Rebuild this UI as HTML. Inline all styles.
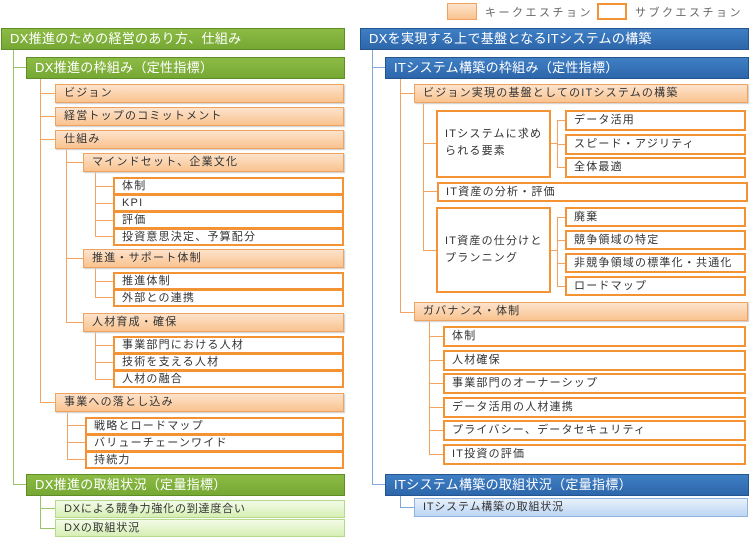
<!DOCTYPE html><html><head><meta charset="utf-8"><style>
body{margin:0;width:750px;height:548px;background:#fff;position:relative;overflow:hidden;font-family:"Liberation Sans","Noto Sans CJK JP",sans-serif;}
div{position:absolute;box-sizing:border-box;white-space:nowrap;}
.g{background:linear-gradient(#8cbc45,#76a834);border:1px solid #5f8d27;color:#fff;font-size:13px;padding-left:8px;line-height:19px;letter-spacing:.3px;}
.b{background:linear-gradient(#3f7fc4,#2d66ab);border:1px solid #24558f;color:#fff;font-size:13px;padding-left:8px;line-height:19px;letter-spacing:.3px;}
.k{background:linear-gradient(#fde3cc,#f9c38f);border:1px solid #f0a260;color:#333;font-size:11px;padding-left:8px;line-height:17px;box-shadow:1px 1px 1px #ccc;letter-spacing:1.2px;}
.s{background:#fff;border:2px solid #f39334;color:#333;font-size:11px;padding-left:7px;line-height:14px;letter-spacing:1.2px;}
.lg{background:linear-gradient(#f3fbe8,#d6efb4);border:1px solid #b6d98a;color:#333;font-size:11px;padding-left:8px;line-height:16px;letter-spacing:.8px;}
.lb{background:linear-gradient(#e8f1fc,#bcd6f3);border:1px solid #8fb4e0;color:#333;font-size:11px;padding-left:8px;line-height:16px;letter-spacing:.8px;}
.vo{width:1px;background:#f4a460;}.ho{height:1px;background:#f4a460;}
.vg{width:1px;background:#9bc46a;}.hg{height:1px;background:#9bc46a;}
.vb{width:1px;background:#7fa7da;}.hb{height:1px;background:#7fa7da;}
.t{font-size:11px;color:#666;letter-spacing:2.5px;}
</style></head><body>
<div style="left:447px;top:3px;width:30px;height:17px;background:linear-gradient(#fde3cc,#f9c38f);border:1px solid #f0a260"></div>
<div class="t" style="left:485px;top:4px">キークエスチョン</div>
<div style="left:597px;top:3px;width:30px;height:17px;border:2px solid #f39334"></div>
<div class="t" style="left:635px;top:4px">サブクエスチョン</div>

<div class="vg" style="left:13px;top:50px;height:435px"></div>
<div class="hg" style="left:13px;top:67px;width:13px"></div>
<div class="hg" style="left:13px;top:484px;width:13px"></div>
<div class="vo" style="left:40px;top:78px;height:325px"></div>
<div class="ho" style="left:40px;top:93px;width:15px"></div>
<div class="ho" style="left:40px;top:116px;width:15px"></div>
<div class="ho" style="left:40px;top:139px;width:15px"></div>
<div class="ho" style="left:40px;top:402px;width:15px"></div>
<div class="vo" style="left:66px;top:149px;height:174px"></div>
<div class="ho" style="left:66px;top:162px;width:17px"></div>
<div class="ho" style="left:66px;top:258px;width:17px"></div>
<div class="ho" style="left:66px;top:322px;width:17px"></div>
<div class="vo" style="left:95px;top:172px;height:65px"></div>
<div class="ho" style="left:95px;top:186px;width:18px"></div>
<div class="ho" style="left:95px;top:203px;width:18px"></div>
<div class="ho" style="left:95px;top:220px;width:18px"></div>
<div class="ho" style="left:95px;top:236px;width:18px"></div>
<div class="vo" style="left:95px;top:268px;height:30px"></div>
<div class="ho" style="left:95px;top:281px;width:18px"></div>
<div class="ho" style="left:95px;top:297px;width:18px"></div>
<div class="vo" style="left:95px;top:332px;height:48px"></div>
<div class="ho" style="left:95px;top:345px;width:18px"></div>
<div class="ho" style="left:95px;top:362px;width:18px"></div>
<div class="ho" style="left:95px;top:379px;width:18px"></div>
<div class="vo" style="left:67px;top:412px;height:48px"></div>
<div class="ho" style="left:67px;top:425px;width:18px"></div>
<div class="ho" style="left:67px;top:442px;width:18px"></div>
<div class="ho" style="left:67px;top:459px;width:18px"></div>
<div class="vg" style="left:40px;top:495px;height:34px"></div>
<div class="hg" style="left:40px;top:508px;width:15px"></div>
<div class="hg" style="left:40px;top:528px;width:15px"></div>

<div class="g" style="left:1px;top:28px;width:344px;height:22px">DX推進のための経営のあり方、仕組み</div>
<div class="g" style="left:26px;top:57px;width:319px;height:22px">DX推進の枠組み（定性指標）</div>
<div class="k" style="left:55px;top:84px;width:289px;height:19px">ビジョン</div>
<div class="k" style="left:55px;top:107px;width:289px;height:19px">経営トップのコミットメント</div>
<div class="k" style="left:55px;top:130px;width:289px;height:19px">仕組み</div>
<div class="k" style="left:83px;top:153px;width:261px;height:19px">マインドセット、企業文化</div>
<div class="s" style="left:113px;top:177px;width:231px;height:18px">体制</div>
<div class="s" style="left:113px;top:194px;width:231px;height:18px">KPI</div>
<div class="s" style="left:113px;top:211px;width:231px;height:18px">評価</div>
<div class="s" style="left:113px;top:228px;width:231px;height:18px">投資意思決定、予算配分</div>
<div class="k" style="left:83px;top:249px;width:261px;height:19px">推進・サポート体制</div>
<div class="s" style="left:113px;top:272px;width:231px;height:18px">推進体制</div>
<div class="s" style="left:113px;top:289px;width:231px;height:18px">外部との連携</div>
<div class="k" style="left:83px;top:313px;width:261px;height:19px">人材育成・確保</div>
<div class="s" style="left:113px;top:336px;width:231px;height:18px">事業部門における人材</div>
<div class="s" style="left:113px;top:353px;width:231px;height:18px">技術を支える人材</div>
<div class="s" style="left:113px;top:370px;width:231px;height:18px">人材の融合</div>
<div class="k" style="left:55px;top:393px;width:289px;height:19px">事業への落とし込み</div>
<div class="s" style="left:85px;top:417px;width:259px;height:18px">戦略とロードマップ</div>
<div class="s" style="left:85px;top:434px;width:259px;height:18px">バリューチェーンワイド</div>
<div class="s" style="left:85px;top:451px;width:259px;height:18px">持続力</div>
<div class="g" style="left:26px;top:474px;width:319px;height:22px">DX推進の取組状況（定量指標）</div>
<div class="lg" style="left:55px;top:500px;width:290px;height:18px">DXによる競争力強化の到達度合い</div>
<div class="lg" style="left:55px;top:519px;width:290px;height:18px">DXの取組状況</div>

<div class="vb" style="left:372px;top:50px;height:435px"></div>
<div class="hb" style="left:372px;top:67px;width:13px"></div>
<div class="hb" style="left:372px;top:484px;width:13px"></div>
<div class="vo" style="left:400px;top:78px;height:235px"></div>
<div class="ho" style="left:400px;top:93px;width:14px"></div>
<div class="ho" style="left:400px;top:312px;width:14px"></div>
<div class="vo" style="left:423px;top:103px;height:148px"></div>
<div class="ho" style="left:423px;top:143px;width:13px"></div>
<div class="ho" style="left:423px;top:191px;width:14px"></div>
<div class="ho" style="left:423px;top:250px;width:13px"></div>
<div class="ho" style="left:550px;top:143px;width:8px"></div>
<div class="vo" style="left:557px;top:120px;height:48px"></div>
<div class="ho" style="left:557px;top:120px;width:8px"></div>
<div class="ho" style="left:557px;top:144px;width:8px"></div>
<div class="ho" style="left:557px;top:167px;width:8px"></div>
<div class="ho" style="left:550px;top:250px;width:8px"></div>
<div class="vo" style="left:557px;top:217px;height:70px"></div>
<div class="ho" style="left:557px;top:217px;width:8px"></div>
<div class="ho" style="left:557px;top:240px;width:8px"></div>
<div class="ho" style="left:557px;top:263px;width:8px"></div>
<div class="ho" style="left:557px;top:286px;width:8px"></div>
<div class="vo" style="left:429px;top:321px;height:134px"></div>
<div class="ho" style="left:429px;top:336px;width:14px"></div>
<div class="ho" style="left:429px;top:360px;width:14px"></div>
<div class="ho" style="left:429px;top:383px;width:14px"></div>
<div class="ho" style="left:429px;top:407px;width:14px"></div>
<div class="ho" style="left:429px;top:430px;width:14px"></div>
<div class="ho" style="left:429px;top:454px;width:14px"></div>
<div class="vb" style="left:400px;top:495px;height:13px"></div>
<div class="hb" style="left:400px;top:507px;width:14px"></div>

<div class="b" style="left:360px;top:28px;width:389px;height:22px">DXを実現する上で基盤となるITシステムの構築</div>
<div class="b" style="left:385px;top:57px;width:364px;height:22px">ITシステム構築の枠組み（定性指標）</div>
<div class="k" style="left:414px;top:84px;width:334px;height:19px">ビジョン実現の基盤としてのITシステムの構築</div>
<div class="s" style="left:436px;top:110px;width:115px;height:68px;line-height:17px;padding:14px 0 0 7px">ITシステムに求め<br>られる要素</div>
<div class="s" style="left:565px;top:110px;width:181px;height:21px;line-height:17px">データ活用</div>
<div class="s" style="left:565px;top:134px;width:181px;height:21px;line-height:17px">スピード・アジリティ</div>
<div class="s" style="left:565px;top:157px;width:181px;height:21px;line-height:17px">全体最適</div>
<div class="s" style="left:437px;top:182px;width:311px;height:20px;line-height:16px">IT資産の分析・評価</div>
<div class="s" style="left:436px;top:207px;width:115px;height:86px;line-height:17px;padding:24px 0 0 7px">IT資産の仕分けと<br>プランニング</div>
<div class="s" style="left:565px;top:207px;width:181px;height:20px;line-height:16px">廃棄</div>
<div class="s" style="left:565px;top:230px;width:181px;height:20px;line-height:16px">競争領域の特定</div>
<div class="s" style="left:565px;top:253px;width:181px;height:20px;line-height:16px">非競争領域の標準化・共通化</div>
<div class="s" style="left:565px;top:276px;width:181px;height:20px;line-height:16px">ロードマップ</div>
<div class="k" style="left:414px;top:302px;width:334px;height:19px">ガバナンス・体制</div>
<div class="s" style="left:443px;top:326px;width:303px;height:21px;line-height:17px">体制</div>
<div class="s" style="left:443px;top:350px;width:303px;height:21px;line-height:17px">人材確保</div>
<div class="s" style="left:443px;top:373px;width:303px;height:21px;line-height:17px">事業部門のオーナーシップ</div>
<div class="s" style="left:443px;top:397px;width:303px;height:21px;line-height:17px">データ活用の人材連携</div>
<div class="s" style="left:443px;top:420px;width:303px;height:21px;line-height:17px">プライバシー、データセキュリティ</div>
<div class="s" style="left:443px;top:444px;width:303px;height:21px;line-height:17px">IT投資の評価</div>
<div class="b" style="left:385px;top:474px;width:364px;height:22px">ITシステム構築の取組状況（定量指標）</div>
<div class="lb" style="left:414px;top:498px;width:334px;height:19px">ITシステム構築の取組状況</div>
</body></html>
